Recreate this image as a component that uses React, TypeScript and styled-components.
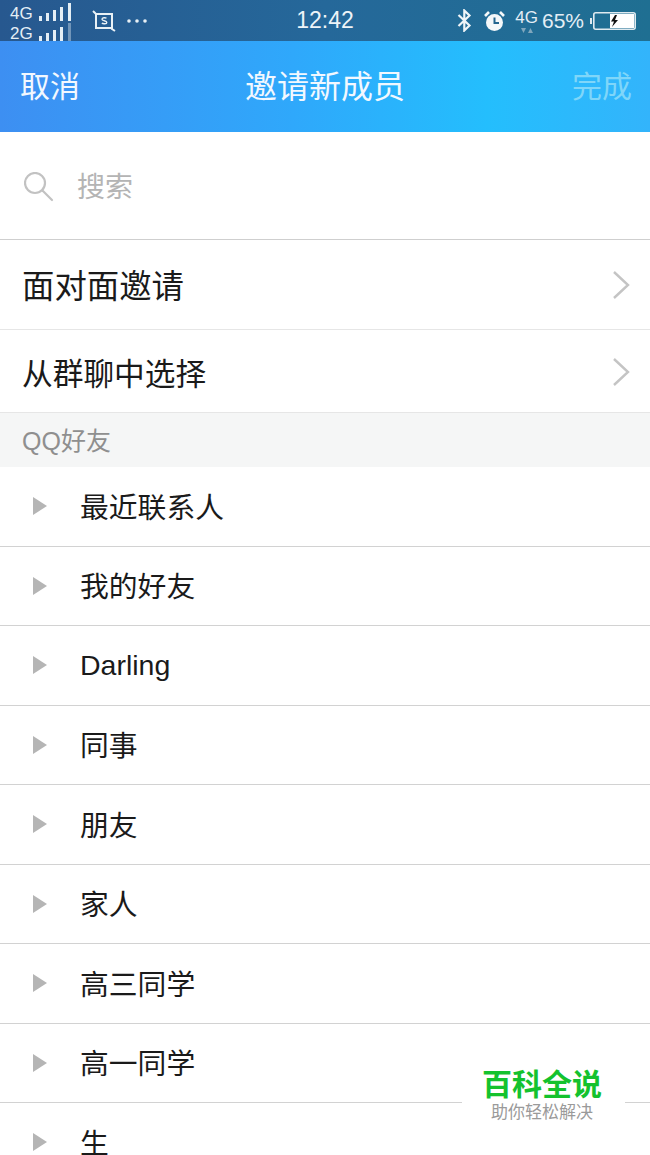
import React from 'react';
import styled, { createGlobalStyle } from 'styled-components';

const cjk = `"Noto Sans CJK SC", "Noto Sans", sans-serif`;

const GlobalStyle = createGlobalStyle`
  html, body {
    margin: 0;
    padding: 0;
    background: #fff;
  }
  body {
    font-family: ${cjk};
  }
`;

const Screen = styled.div`
  position: relative;
  width: 650px;
  height: 1155px;
  overflow: hidden;
  background: #fff;
`;

const StatusBar = styled.div`
  height: 41px;
  box-sizing: border-box;
  padding: 0 14px 0 10px;
  display: flex;
  align-items: center;
  background: linear-gradient(90deg, #27588f 0%, #25689a 50%, #1f6f92 100%);
  color: #e4eef5;
  font-family: "Liberation Sans", sans-serif;
`;

const StatusSide = styled.div`
  flex: 1;
  display: flex;
  align-items: center;
  justify-content: ${p => (p.$end ? 'flex-end' : 'flex-start')};
`;

const Clock = styled.div`
  margin-left: 4px;
  font-size: 23px;
  color: #eef4f8;
`;

const Signals = styled.div`
  display: flex;
  flex-direction: column;
  margin: 6px 20px 0 0;
`;

const SignalLine = styled.div`
  display: flex;
  align-items: center;
  height: 20px;
  gap: 6px;
  font-size: 17px;
  line-height: 20px;
`;

const Bars = styled.svg`
  align-self: flex-start;
  margin-top: -1px;
  fill: #e4eef5;
`;

const ScreenshotGlyph = styled.svg`
  margin-right: 10px;
  stroke: #e9f1f6;
  fill: none;
`;

const DotsGlyph = styled.svg`
  fill: #e9f1f6;
`;

const BluetoothGlyph = styled.svg`
  margin-right: 12px;
  fill: none;
  stroke: #f0f5f8;
`;

const NetLabel = styled.div`
  display: flex;
  flex-direction: column;
  align-items: center;
  margin: 0 4px 0 10px;
  font-size: 17px;
  line-height: 18px;
`;

const NetArrows = styled.svg`
  margin-top: 1px;
  fill: #7fa6bd;
`;

const Percent = styled.span`
  margin-right: 6px;
  font-size: 21px;
`;

const NavBar = styled.div`
  height: 91px;
  box-sizing: border-box;
  padding: 0 18px 6px 20px;
  display: flex;
  align-items: center;
  justify-content: space-between;
  background: linear-gradient(90deg, #3d8ff2 0%, #2fa8fb 45%, #24befd 75%, #33b4fb 100%);
  color: #f2f8ff;
  font-size: 30px;
`;

const NavTitle = styled.div`
  margin-right: 2px;
  font-size: 32px;
`;

const NavDone = styled.div`
  color: #7fd6f9;
`;

const SearchRow = styled.div`
  height: 108px;
  box-sizing: border-box;
  padding: 0 0 2px 24px;
  display: flex;
  align-items: center;
  gap: 23px;
  border-bottom: 1px solid #cfcfcf;
  color: #b4b4b4;
  font-size: 28px;
`;

const SearchGlyph = styled.svg`
  margin-top: 4px;
  fill: none;
  stroke: #c2c2c2;
  stroke-width: 2.2;
`;

const ActionRow = styled.div`
  height: ${p => p.$height}px;
  box-sizing: border-box;
  padding: 0 20px ${p => p.$pad}px 22px;
  display: flex;
  align-items: center;
  justify-content: space-between;
  border-bottom: 1px solid #e6e6e6;
  color: #1a1a1a;
  font-size: ${p => p.$size}px;
`;

const Chevron = styled.svg`
  margin-top: 2px;
  fill: none;
  stroke: #c4c4c4;
  stroke-width: 2.4;
`;

const SectionHeader = styled.div`
  height: 54px;
  box-sizing: border-box;
  padding: 0 0 2px 22px;
  display: flex;
  align-items: center;
  background: #f5f6f6;
  color: #8f8f8f;
  font-family: "Liberation Sans", ${cjk};
  font-size: 25px;
`;

const GroupRow = styled.div`
  height: 79.5px;
  box-sizing: border-box;
  padding: 0 0 2px 33px;
  display: flex;
  align-items: center;
  border-bottom: 1px solid #d2d2d2;
  color: #1a1a1a;
  font-size: 28.8px;
`;

const Arrow = styled.span`
  width: 0;
  height: 0;
  margin: 2px 33px 0 0;
  border-top: 9px solid transparent;
  border-bottom: 9px solid transparent;
  border-left: 14px solid #b5b5b5;
`;

const GroupName = styled.span`
  margin-top: ${p => (p.$latin ? '2px' : '0')};
  font-family: ${p => (p.$latin ? `"Liberation Sans", ${cjk}` : cjk)};
  font-size: ${p => (p.$latin ? '28.5px' : 'inherit')};
`;

const Watermark = styled.div`
  position: absolute;
  left: 462px;
  top: 1060px;
  width: 163px;
  height: 74px;
  box-sizing: border-box;
  padding-right: 3px;
  display: flex;
  flex-direction: column;
  align-items: center;
  background: #fff;
`;

const WatermarkTitle = styled.div`
  margin-top: 4px;
  color: #14c22e;
  font-size: 30px;
  line-height: 36px;
  font-weight: 700;
`;

const WatermarkSub = styled.div`
  color: #9a9a9a;
  font-size: 17px;
  line-height: 22px;
`;

const groups = ['最近联系人', '我的好友', 'Darling', '同事', '朋友', '家人', '高三同学', '高一同学', '生'];

const SignalBars = ({ dim }: { dim?: boolean }) => (
  <Bars width="33" height="18" viewBox="0 0 33 18">
    <rect x="0" y="13" width="3" height="5" />
    <rect x="7" y="10" width="3" height="8" />
    <rect x="14" y="7" width="3" height="11" />
    <rect x="21" y="4" width="3" height="14" />
    <rect x="29" y="0" width="3" height="18" opacity={dim ? 0.4 : 1} />
  </Bars>
);

const ScreenshotIcon = () => (
  <ScreenshotGlyph width="24" height="22" viewBox="0 0 24 22" strokeWidth="2">
    <path d="M1 1l3 3h16v15l3 2M4 4v14h16" />
    <path d="M14.5 8.2c-1-.7-4.5-.8-4.5 1 0 2 4.8 1 4.8 3.2 0 1.700-3.600 1.700-5 .8" strokeWidth="1.400" />
  </ScreenshotGlyph>
);

const DotsIcon = () => (
  <DotsGlyph width="22" height="6" viewBox="0 0 22 6">
    <circle cx="3" cy="3" r="1.800" />
    <circle cx="11" cy="3" r="1.800" />
    <circle cx="19" cy="3" r="1.800" />
  </DotsGlyph>
);

const BluetoothIcon = () => (
  <BluetoothGlyph width="15" height="23" viewBox="0 0 15 23" strokeWidth="2.200">
    <path d="M1.500 6l11 10.500-5.200 5V1.500l5.200 5L1.500 17" />
  </BluetoothGlyph>
);

const AlarmIcon = () => (
  <svg width="21" height="22" viewBox="0 0 21 22">
    <circle cx="10.500" cy="12.500" r="8.500" fill="#f4f8fa" />
    <path d="M1 6l4-4M20 6l-4-4" stroke="#f4f8fa" strokeWidth="2.600" />
    <path d="M10.500 7.500v5.500h4.500" fill="none" stroke="#24668f" strokeWidth="2" />
  </svg>
);

const BatteryIcon = () => (
  <svg width="46" height="18" viewBox="0 0 46 18">
    <rect x="0" y="6" width="2" height="6" fill="#dfeaf0" />
    <rect x="3.800" y="0.800" width="41.400" height="16.400" rx="2" fill="none" stroke="#dfeaf0" strokeWidth="1.600" />
    <rect x="20" y="2" width="24" height="14" fill="#fff" />
    <path d="M25 3l-4 6.500h3l-2 5.500 6-7h-3l2-5z" fill="#111" />
  </svg>
);

const SearchIcon = () => (
  <SearchGlyph width="30" height="30" viewBox="0 0 30 30">
    <circle cx="11" cy="11" r="10" />
    <path d="M18.500 18.500l9.500 9.500" strokeLinecap="round" />
  </SearchGlyph>
);

const ChevronIcon = () => (
  <Chevron width="18" height="30" viewBox="0 0 18 30">
    <path d="M2 2l14 13L2 28" />
  </Chevron>
);

const App = () => {
  return (
    <Screen>
      <GlobalStyle />
      <StatusBar>
        <StatusSide>
          <Signals>
            <SignalLine>4G <SignalBars /></SignalLine>
            <SignalLine>2G <SignalBars dim /></SignalLine>
          </Signals>
          <ScreenshotIcon />
          <DotsIcon />
        </StatusSide>
        <Clock>12:42</Clock>
        <StatusSide $end>
          <BluetoothIcon />
          <AlarmIcon />
          <NetLabel>
            4G
            <NetArrows width="14" height="5" viewBox="0 0 14 5">
              <path d="M1 0h5L3.500 5zM8 5h5l-2.500-5z" />
            </NetArrows>
          </NetLabel>
          <Percent>65%</Percent>
          <BatteryIcon />
        </StatusSide>
      </StatusBar>
      <NavBar>
        <div>取消</div>
        <NavTitle>邀请新成员</NavTitle>
        <NavDone>完成</NavDone>
      </NavBar>
      <SearchRow>
        <SearchIcon />
        <span>搜索</span>
      </SearchRow>
      <ActionRow $height={90} $size={32.4} $pad={2}>
        面对面邀请
        <ChevronIcon />
      </ActionRow>
      <ActionRow $height={83} $size={30.7} $pad={0}>
        从群聊中选择
        <ChevronIcon />
      </ActionRow>
      <SectionHeader>QQ好友</SectionHeader>
      {groups.map(name => (
        <GroupRow key={name}>
          <Arrow />
          <GroupName $latin={name === 'Darling'}>{name}</GroupName>
        </GroupRow>
      ))}
      <Watermark>
        <WatermarkTitle>百科全说</WatermarkTitle>
        <WatermarkSub>助你轻松解决</WatermarkSub>
      </Watermark>
    </Screen>
  );
};

export default App;
